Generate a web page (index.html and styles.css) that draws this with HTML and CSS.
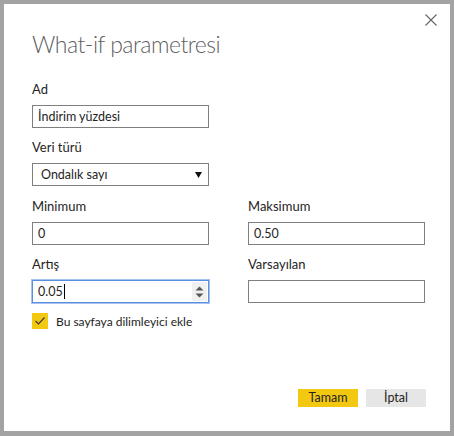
FILE: index.html
```html
<!DOCTYPE html>
<html lang="tr">
<head>
<meta charset="utf-8">
<link rel="stylesheet" href="styles.css">
</head>
<body>
<div class="dialog">
  <button class="close" aria-label="Kapat">
    <svg width="12" height="12" viewBox="0 0 12 12"><path d="M0.5 0.5 L11.5 11.5 M11.5 0.5 L0.5 11.5" stroke="#666" stroke-width="1.1" fill="none"/></svg>
  </button>
  <h1 class="title">What-if parametresi</h1>

  <div class="field ad">
    <label class="label">Ad</label>
    <div class="input">İndirim yüzdesi</div>
  </div>

  <div class="field veri">
    <label class="label">Veri türü</label>
    <div class="input select">Ondalık sayı
      <svg class="arrow" width="7" height="6" viewBox="0 0 7 6"><path d="M0 0 H7 L3.5 6 Z" fill="#111"/></svg>
    </div>
  </div>

  <div class="row r1">
    <div class="field col">
      <label class="label">Minimum</label>
      <div class="input">0</div>
    </div>
    <div class="field col">
      <label class="label">Maksimum</label>
      <div class="input">0.50</div>
    </div>
  </div>

  <div class="row r2">
    <div class="field col">
      <label class="label">Artış</label>
      <div class="input focus">0.05<span class="caret"></span>
        <span class="spin">
          <svg width="9" height="12" viewBox="0 0 9 12"><path d="M4.5 0.5 L8.5 4.5 H0.5 Z M4.5 11.5 L8.5 7.5 H0.5 Z" fill="#555"/></svg>
        </span>
      </div>
    </div>
    <div class="field col">
      <label class="label">Varsayılan</label>
      <div class="input"></div>
    </div>
  </div>

  <div class="check">
    <span class="box">
      <svg width="12" height="10" viewBox="0 0 12 10"><path d="M1.5 5 L4.5 8 L10.5 1.5" stroke="#3a3a3a" stroke-width="1.2" fill="none"/></svg>
    </span>
    <span class="check-label">Bu sayfaya dilimleyici ekle</span>
  </div>

  <div class="buttons">
    <button class="btn primary">Tamam</button>
    <button class="btn secondary">İptal</button>
  </div>
</div>
</body>
</html>
```
FILE: styles.css
```css
html, body {
  margin: 0;
  padding: 0;
}
body {
  background: #a3a3a3;
  width: 454px;
  height: 436px;
  padding: 4px 4px 5px 4px;
  box-sizing: border-box;
  font-family: "Lato", "Noto Sans", sans-serif;
  color: #252423;
}
.dialog {
  position: relative;
  background: #fff;
  width: 446px;
  height: 427px;
  box-sizing: border-box;
  padding: 25px 0 0 28px;
  display: flex;
  flex-direction: column;
}
.close {
  position: absolute;
  top: 6px;
  right: 9px;
  width: 20px;
  height: 20px;
  border: 0;
  background: transparent;
  padding: 4px;
  display: flex;
  align-items: center;
  justify-content: center;
}
.title {
  margin: 0;
  font-weight: 300;
  font-size: 23px;
  line-height: 30px;
  color: #5f5f5f;
  letter-spacing: -0.5px;
}
.field {
  display: flex;
  flex-direction: column;
  width: 177px;
}
.label {
  font-size: 13px;
  line-height: 16px;
  margin-bottom: 8px;
  color: #252423;
}
.input {
  position: relative;
  height: 23px;
  box-sizing: border-box;
  border: 1px solid #7f7f7f;
  font-size: 12.5px;
  line-height: 21px;
  padding: 0 5px;
  color: #252423;
  display: flex;
  align-items: center;
}
.ad { margin-top: 22px; }
.veri { margin-top: 11px; }
.select { padding-left: 8px; }
.arrow {
  position: absolute;
  right: 6px;
  top: 8px;
}
.row {
  display: flex;
  gap: 39px;
}
.r1 { margin-top: 12px; }
.r2 { margin-top: 11px; }
.focus {
  border-color: #5a8ee0;
  box-shadow: 0 0 0 1px #a8c4ee;
}
.caret {
  display: inline-block;
  width: 1px;
  height: 15px;
  background: #000;
  margin-left: 1px;
}
.spin {
  position: absolute;
  right: 1px;
  top: 1px;
  bottom: 1px;
  width: 15px;
  background: #f0f0f0;
  display: flex;
  align-items: center;
  justify-content: center;
}
.check {
  margin-top: 10px;
  display: flex;
  align-items: center;
  gap: 8px;
}
.box {
  width: 16px;
  height: 16px;
  background: #f2c811;
  display: flex;
  align-items: center;
  justify-content: center;
}
.check-label {
  font-size: 12px;
  color: #252423;
}
.buttons {
  margin-top: auto;
  margin-bottom: 24px;
  align-self: flex-end;
  margin-right: 24px;
  display: flex;
  gap: 8px;
}
.btn {
  width: 60px;
  height: 18px;
  border: 0;
  padding: 0;
  font-family: "Lato", "Noto Sans", sans-serif;
  font-size: 12.5px;
  line-height: 18px;
  color: #252423;
}
.primary { background: #f2c811; }
.secondary { background: #e6e6e6; }
```
